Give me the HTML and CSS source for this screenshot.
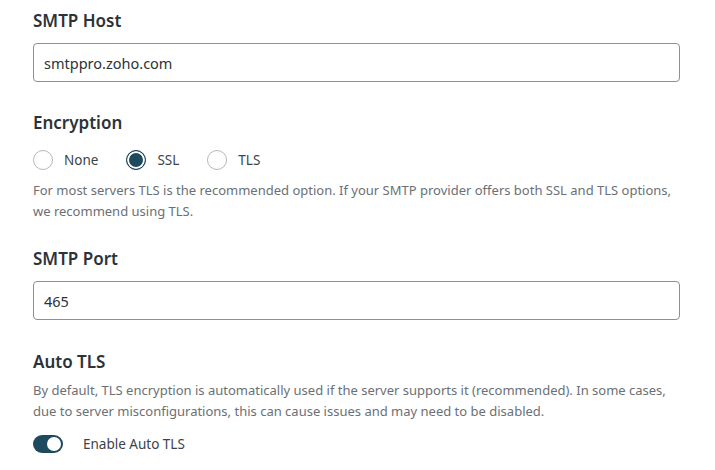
FILE: index.html
```html
<!DOCTYPE html>
<html>
<head>
<meta charset="utf-8">
<link rel="stylesheet" href="styles.css">
</head>
<body>
<div class="form">
  <section class="field">
    <h2 class="label">SMTP Host</h2>
    <div class="input">smtppro.zoho.com</div>
  </section>
  <section class="field enc">
    <h2 class="label">Encryption</h2>
    <div class="radios">
      <label class="radio"><span class="dot"></span>None</label>
      <label class="radio"><span class="dot on"></span>SSL</label>
      <label class="radio"><span class="dot"></span>TLS</label>
    </div>
    <p class="help">For most servers TLS is the recommended option. If your SMTP provider offers both SSL and TLS options, we recommend using TLS.</p>
  </section>
  <section class="field port">
    <h2 class="label">SMTP Port</h2>
    <div class="input">465</div>
  </section>
  <section class="field auto">
    <h2 class="label tight">Auto TLS</h2>
    <p class="help">By default, TLS encryption is automatically used if the server supports it (recommended). In some cases, due to server misconfigurations, this can cause issues and may need to be disabled.</p>
    <label class="toggle-row"><span class="toggle"><span class="knob"></span></span>Enable Auto TLS</label>
  </section>
</div>
</body>
</html>
```
FILE: styles.css
```css
html, body { margin: 0; padding: 0; background: #fff; }
body { font-family: "Noto Sans", "Open Sans", sans-serif; color: #2c3338; }
.form { padding: 9px 35px 0 33px; display: flex; flex-direction: column; }
.field { display: flex; flex-direction: column; }
.field.enc { margin-top: 29px; }
.field.port { margin-top: 25px; }
.field.auto { margin-top: 30px; }
.label { margin: 0 0 10px; font-size: 17px; font-weight: 600; line-height: 24px; color: #2c3338; }
.label.tight { margin-bottom: 0; }
.input {
  box-sizing: border-box; height: 39px;
  border: 1px solid #8c8f94; border-radius: 4px;
  padding: 0 10px; display: flex; align-items: center;
  font-size: 14.5px; color: #2c3338;
}
.radios { display: flex; height: 28px; align-items: center; margin-top: 1px; }
.radio { display: flex; align-items: center; font-size: 13.5px; color: #3c434a; margin-right: 28px; }
.dot {
  width: 18px; height: 18px; border-radius: 50%; border: 1px solid #b4b7ba;
  margin-right: 11px; box-sizing: content-box;
}
.dot.on { border-color: #1d3f52; background: #1d4a5e; box-shadow: inset 0 0 0 2px #fff; border-width: 1.5px; }
.help { margin: 6px 0 0; font-size: 13px; line-height: 21px; color: #6b7075; }
.toggle-row { display: flex; align-items: center; margin-top: 13px; font-size: 13.5px; color: #3c434a; }
.toggle {
  width: 30px; height: 18px; border-radius: 9px; background: #1d4a5e;
  display: flex; align-items: center; justify-content: flex-end; padding: 0 2px; box-sizing: border-box;
  margin-right: 20px;
}
.knob { width: 14px; height: 14px; border-radius: 50%; background: #fff; }
```
